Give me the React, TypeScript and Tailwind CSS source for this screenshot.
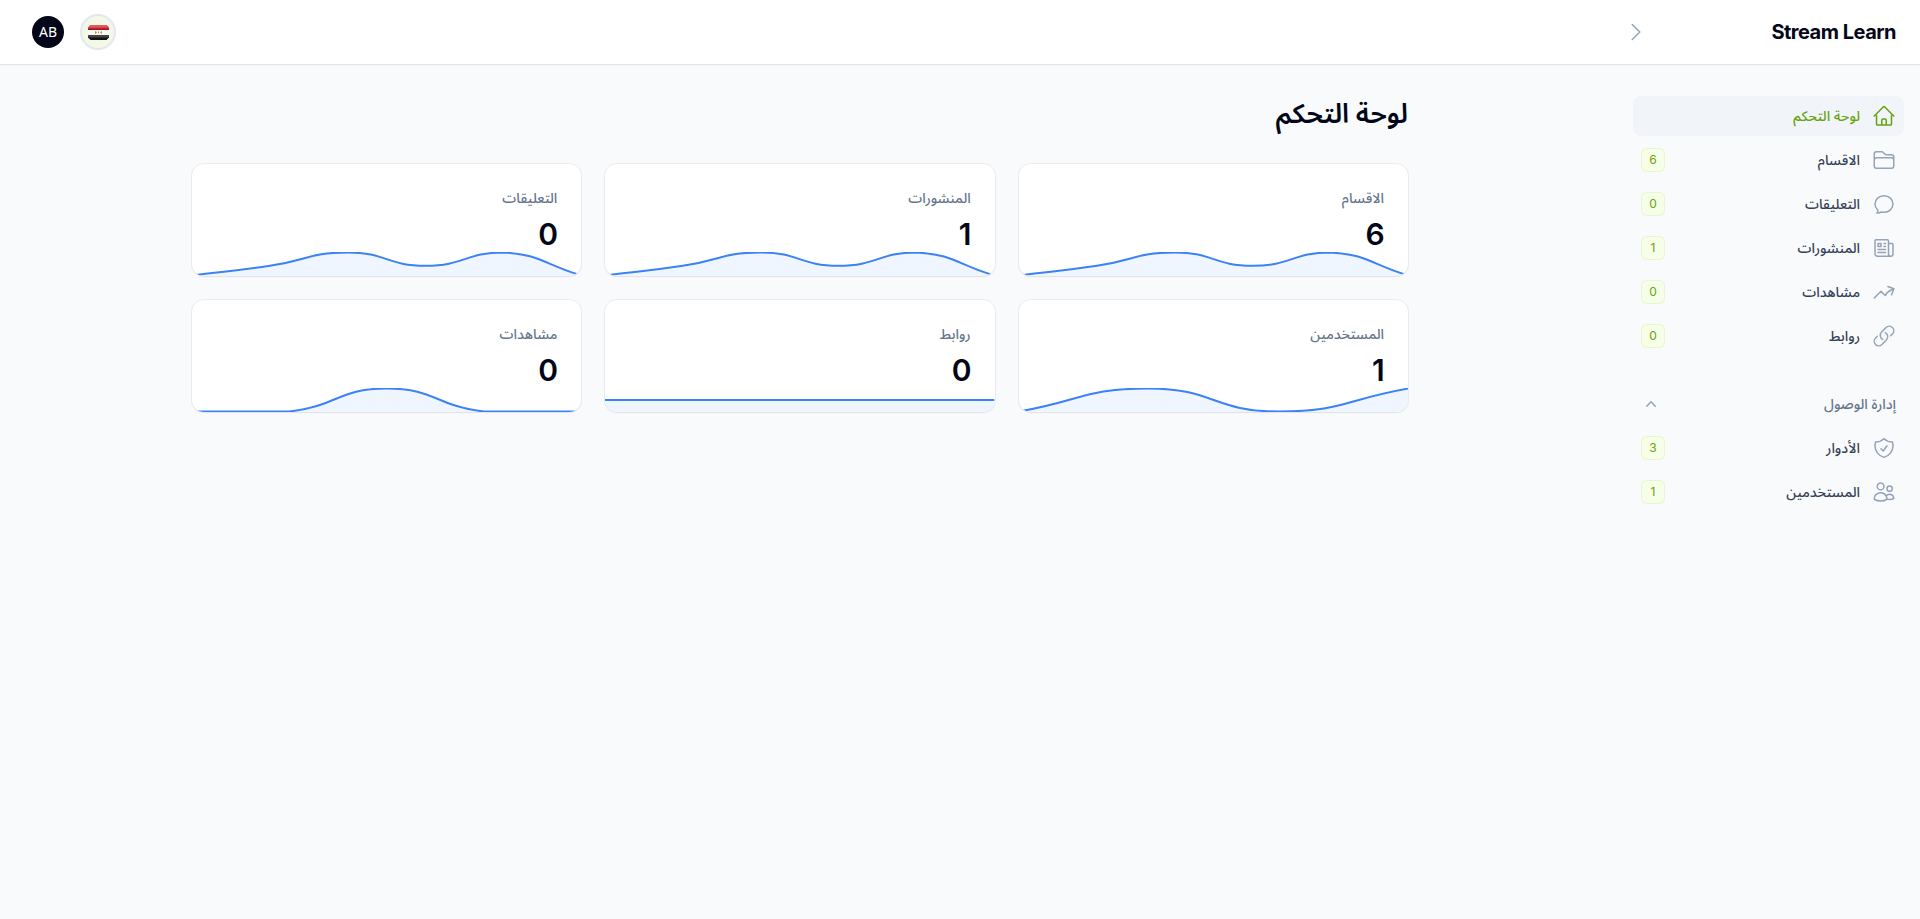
import type { ComponentType } from "react";
import {
  HiOutlineHome,
  HiOutlineFolder,
  HiOutlineChatBubbleOvalLeft,
  HiOutlineNewspaper,
  HiOutlineArrowTrendingUp,
  HiOutlineLink,
  HiOutlineShieldCheck,
  HiOutlineUsers,
  HiOutlineChevronRight,
} from "react-icons/hi2";

type NavEntry = {
  label: string;
  icon: ComponentType<{ className?: string }>;
  badge?: number;
  active?: boolean;
};

const mainNav: NavEntry[] = [
  { label: "لوحة التحكم", icon: HiOutlineHome, active: true },
  { label: "الاقسام", icon: HiOutlineFolder, badge: 6 },
  { label: "التعليقات", icon: HiOutlineChatBubbleOvalLeft, badge: 0 },
  { label: "المنشورات", icon: HiOutlineNewspaper, badge: 1 },
  { label: "مشاهدات", icon: HiOutlineArrowTrendingUp, badge: 0 },
  { label: "روابط", icon: HiOutlineLink, badge: 0 },
];

const accessNav: NavEntry[] = [
  { label: "الأدوار", icon: HiOutlineShieldCheck, badge: 3 },
  { label: "المستخدمين", icon: HiOutlineUsers, badge: 1 },
];

const stats = [
  { label: "الاقسام", value: 6, points: [0, 0.42, 1, 0.42, 1, 0] },
  { label: "المنشورات", value: 1, points: [0, 0.42, 1, 0.42, 1, 0] },
  { label: "التعليقات", value: 0, points: [0, 0.42, 1, 0.42, 1, 0] },
  { label: "المستخدمين", value: 1, points: [0, 1, 0, 1] },
  { label: "روابط", value: 0, points: [0.5, 0.5] },
  { label: "مشاهدات", value: 0, points: [0, 0, 1, 0, 0] },
];

const CHART_W = 390;
const TOP = 0.5;
const BOTTOM = 23.5;

const clampY = (y: number) => Math.min(BOTTOM, Math.max(TOP, y));

// Cubic spline with a tension of 0.5, control points kept inside the chart area.
function linePath(values: number[]) {
  const pts = values.map((v, i) => ({
    x: (i * CHART_W) / (values.length - 1),
    y: BOTTOM - v * (BOTTOM - TOP),
  }));
  const ctrl = pts.map((p, i) => {
    const prev = pts[i - 1] ?? p;
    const next = pts[i + 1] ?? p;
    const d01 = Math.hypot(p.x - prev.x, p.y - prev.y);
    const d12 = Math.hypot(next.x - p.x, next.y - p.y);
    const fa = (0.5 * d01) / (d01 + d12);
    const fb = (0.5 * d12) / (d01 + d12);
    return {
      inX: p.x - fa * (next.x - prev.x),
      inY: clampY(p.y - fa * (next.y - prev.y)),
      outX: p.x + fb * (next.x - prev.x),
      outY: clampY(p.y + fb * (next.y - prev.y)),
    };
  });
  return pts
    .map((p, i) =>
      i === 0
        ? `M${p.x},${p.y}`
        : `C${ctrl[i - 1].outX},${ctrl[i - 1].outY} ${ctrl[i].inX},${ctrl[i].inY} ${p.x},${p.y}`,
    )
    .join(" ");
}

function Sparkline({ points }: { points: number[] }) {
  const d = linePath(points);
  return (
    <svg
      className="absolute inset-x-0 bottom-0 h-6 w-full"
      viewBox={`0 0 ${CHART_W} 24`}
      preserveAspectRatio="none"
      aria-hidden="true"
    >
      <path d={`${d} L${CHART_W},24 L0,24 Z`} fill="#eff6ff" />
      <path d={d} fill="none" stroke="#3b82f6" strokeWidth="2" vectorEffect="non-scaling-stroke" />
    </svg>
  );
}

function StatCard({ label, value, points }: (typeof stats)[number]) {
  return (
    <section className="relative overflow-hidden rounded-xl bg-white p-6 shadow-xs ring-1 ring-[#020617]/5">
      <div className="flex flex-col gap-2">
        <h2 className="text-sm font-medium text-[#64748b]">{label}</h2>
        <p className="relative z-10 text-3xl font-semibold tracking-tight text-[#020617]">{value}</p>
      </div>
      <Sparkline points={points} />
    </section>
  );
}

function NavItem({ label, icon: Icon, badge, active }: NavEntry) {
  return (
    <li>
      <a
        href="#"
        className={
          active
            ? "flex h-10 items-center gap-3 rounded-lg bg-[#f1f4f9] px-2 text-[#65a30d]"
            : "flex h-10 items-center gap-3 rounded-lg px-2 text-[#334155]"
        }
      >
        <Icon className={active ? "size-6 text-[#65a30d]" : "size-6 text-[#94a3b8]"} />
        <span className="flex-1 text-sm font-medium">{label}</span>
        {badge !== undefined && (
          <span className="flex h-6 min-w-6 items-center justify-center rounded-md bg-[#f7fee7] px-2 text-xs font-normal text-[#65a30d] ring-1 ring-inset ring-[#65a30d]/10">
            {badge}
          </span>
        )}
      </a>
    </li>
  );
}

function EgyptFlag() {
  return (
    <svg viewBox="0 0 21 15" className="h-[15px] w-[21px]" aria-hidden="true">
      <clipPath id="flag">
        <path d="M2.5 0H18.5L21 2.5V12.5L18.5 15H2.5L0 12.5V2.5Z" />
      </clipPath>
      <g clipPath="url(#flag)">
        <rect width="21" height="15" fill="#fafafa" />
        <rect width="21" height="5" fill="#c1272d" />
        <rect width="21" height="2.5" fill="#dc5f66" />
        <rect y="4" width="21" height="1" fill="#a80f1c" />
        <rect y="10" width="21" height="5" fill="#111" />
        <rect y="10" width="21" height="2.5" fill="#444" />
        <path d="M7 6l2 1.2L7.6 9 7 8.6zM14 6l-2 1.2L13.4 9l.6-.4zM10 6.6h1v1.6h-1z" fill="#c8922e" />
      </g>
    </svg>
  );
}

export default function App() {
  return (
    <div
      dir="rtl"
      lang="ar"
      className="flex min-h-screen flex-col bg-[#f9fafc] font-['Inter','Noto_Sans_Arabic','Noto_Sans',sans-serif] text-[#020617]"
    >
      <header className="relative z-10 flex h-16 items-center justify-between bg-white pr-6 pl-8 shadow-xs ring-1 ring-[#020617]/5">
        <div className="flex w-68 items-center justify-between">
          <a href="#" dir="ltr" className="text-xl leading-5 font-bold tracking-tight">
            Stream Learn
          </a>
          <button type="button" aria-label="طي القائمة" className="text-[#94a3b8]">
            <HiOutlineChevronRight className="size-6" />
          </button>
        </div>
        <div className="flex items-center gap-4">
          <button
            type="button"
            aria-label="اللغة"
            className="flex size-9 items-center justify-center rounded-full border-2 border-[#e2e8f0] bg-[#f3f9e6]"
          >
            <EgyptFlag />
          </button>
          <button
            type="button"
            className="flex size-8 items-center justify-center rounded-full bg-[#020617] font-['Noto_Sans',sans-serif] text-sm text-white"
          >
            AB
          </button>
        </div>
      </header>

      <div className="flex flex-1">
        <aside className="w-80 shrink-0 py-8 pr-4 pl-[33px]">
          <nav className="flex flex-col gap-7">
            <ul className="flex flex-col gap-1">
              {mainNav.map((item) => (
                <NavItem key={item.label} {...item} />
              ))}
            </ul>
            <div className="flex flex-col gap-1">
              <button
                type="button"
                aria-expanded="true"
                className="flex h-10 items-center justify-between px-2 text-[#64748b]"
              >
                <span className="text-sm font-medium">إدارة الوصول</span>
                <svg viewBox="0 0 20 20" className="size-5 text-[#94a3b8]" fill="currentColor" aria-hidden="true">
                  <path
                    fillRule="evenodd"
                    clipRule="evenodd"
                    d="M14.77 12.79a.75.75 0 0 1-1.06-.02L10 8.832 6.29 12.77a.75.75 0 1 1-1.08-1.04l4.25-4.5a.75.75 0 0 1 1.08 0l4.25 4.5a.75.75 0 0 1-.02 1.06Z"
                  />
                </svg>
              </button>
              <ul className="flex flex-col gap-1">
                {accessNav.map((item) => (
                  <NavItem key={item.label} {...item} />
                ))}
              </ul>
            </div>
          </nav>
        </aside>

        <main className="mx-auto flex w-full max-w-7xl flex-col gap-8 px-8 py-8">
          <h1 className="text-[27px] leading-9 font-semibold tracking-tight">لوحة التحكم</h1>
          <div className="grid grid-cols-3 gap-6">
            {stats.map((stat) => (
              <StatCard key={stat.label} {...stat} />
            ))}
          </div>
        </main>
      </div>
    </div>
  );
}
